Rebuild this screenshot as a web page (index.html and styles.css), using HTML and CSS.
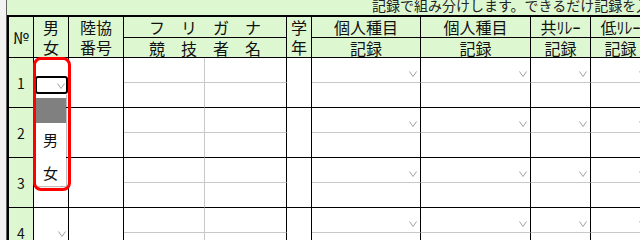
FILE: index.html
```html
<!DOCTYPE html>
<html lang="ja">
<head>
  <meta charset="UTF-8" />
  <title>申込入力</title>
  <link rel="stylesheet" href="styles.css">
</head>
<body>

  <div class="page">
    <div class="gutter"></div>
    <div class="sheet">
      <div class="caption">記録で組み分けします。できるだけ記録を入力してください。</div>
      <table class="entry">
        <colgroup>
          <col class="c-no"><col class="c-sex"><col class="c-reg"><col class="c-sei"><col class="c-mei">
          <col class="c-year"><col class="c-ind"><col class="c-ind2"><col class="c-relay"><col class="c-relay">
        </colgroup>
        <thead>
          <tr class="h1">
            <th rowspan="2" class="no-head">№</th>
            <th rowspan="2"><div class="stack">男<br>女</div></th>
            <th rowspan="2"><div class="stack">陸協<br>番号</div></th>
            <th colspan="2" class="spread"><span>フ</span><span>リ</span><span>ガ</span><span>ナ</span></th>
            <th rowspan="2"><div class="stack">学<br>年</div></th>
            <th class="small">個人種目</th>
            <th class="small">個人種目</th>
            <th class="small">共ﾘﾚｰ</th>
            <th class="small">低ﾘﾚｰ</th>
          </tr>
          <tr class="h2">
            <th colspan="2" class="spread"><span>競</span><span>技</span><span>者</span><span>名</span></th>
            <th>記録</th>
            <th>記録</th>
            <th>記録</th>
            <th>記録</th>
          </tr>
        </thead>
        <tbody id="rows"></tbody>
      </table>
    </div>
  </div>

  <!-- open dropdown on row 1 -->
  <div class="picker-box">
    <svg class="chev in-box" viewBox="0 0 8 6" width="8" height="6"><polyline points="0.5,0.5 4,5.5 7.5,0.5" fill="none" stroke="#a0a0a0" stroke-width="1"/></svg>
  </div>
  <div class="picker-list">
    <div class="opt sel"></div>
    <div class="opt">男</div>
    <div class="opt">女</div>
  </div>
  <div class="callout"></div>

  <script>
    const chev = '<svg class="chev" viewBox="0 0 8 6" width="8" height="6"><polyline points="0.5,0.5 4,5.5 7.5,0.5" fill="none" stroke="#a0a0a0" stroke-width="1"/></svg>';
    const rows = document.getElementById('rows');

    for (let n = 1; n <= 4; n++) {
      const sex = n === 1 ? '' : chev;
      rows.insertAdjacentHTML('beforeend', `
        <tr class="upper">
          <td rowspan="2" class="no">${n}</td>
          <td rowspan="2" class="sex">${sex}</td>
          <td rowspan="2"></td>
          <td class="sei"></td>
          <td></td>
          <td rowspan="2"></td>
          <td class="pick">${chev}</td>
          <td class="pick">${chev}</td>
          <td class="pick">${chev}</td>
          <td class="pick">${chev}</td>
        </tr>
        <tr class="lower">
          <td class="sei"></td>
          <td></td>
          <td></td>
          <td></td>
          <td></td>
          <td></td>
        </tr>`);
    }
  </script>

</body>
</html>
```

FILE: styles.css
```css
body {
  margin: 0;
  width: 640px;
  height: 240px;
  overflow: hidden;
  position: relative;
  font-family: "Noto Sans CJK JP", sans-serif;
  color: #111;
  background: #fff;
}

.page {
  display: flex;
  height: 100%;
}

.gutter {
  width: 6px;
  flex: none;
  background: #f2f2f2;
  border-right: 1px solid #606060;
}

.sheet {
  flex: 1;
  background: #ddf8d0;
}

.caption {
  height: 15px;
  padding-left: 365px;
  font-size: 14px;
  line-height: 10px;
  white-space: nowrap;
  overflow: hidden;
  color: #222;
}

.entry {
  border-collapse: separate;
  border-spacing: 0;
  table-layout: fixed;
  width: 644px;
  border-top: 2px solid #000;
  border-left: 2px solid #000;
}

.c-no { width: 25px; }
.c-sex { width: 35px; }
.c-reg { width: 55px; }
.c-sei { width: 81px; }
.c-mei { width: 82px; }
.c-year { width: 25px; }
.c-ind { width: 109px; }
.c-ind2 { width: 110px; }
.c-relay { width: 60px; }

.entry th,
.entry td {
  padding: 0;
  box-sizing: border-box;
  border-right: 1px solid #000;
  border-bottom: 1px solid #000;
  text-align: center;
  font-weight: normal;
  line-height: 1;
}

.entry th {
  background: #ddf8d0;
  font-size: 16px;
}

.entry td {
  background: #fff;
  position: relative;
}

.h1 { height: 21px; }
.h2 { height: 20px; }
.upper { height: 25px; }
.lower { height: 25px; }

.no-head {
  font-size: 14px;
}

.stack {
  line-height: 20px;
}

.small {
  font-size: 13px;
}

.spread span {
  display: inline-block;
  width: 16px;
  margin: 0 8px;
}

.entry td.no {
  background: #ddf8d0;
  font-size: 14px;
}

.upper td {
  border-bottom-color: #c8c8c8;
}

.upper td[rowspan] {
  border-bottom-color: #000;
}

.entry td.sei {
  border-right-color: #c8c8c8;
}

.chev {
  position: absolute;
  display: block;
}

.pick .chev {
  right: 3px;
  top: 13px;
}

.sex .chev {
  right: 2px;
  top: 23px;
}

.picker-box {
  position: absolute;
  left: 35px;
  top: 76px;
  width: 33px;
  height: 18px;
  box-sizing: border-box;
  border: 2px solid #000;
  border-radius: 3px;
  background: #fff;
}

.chev.in-box {
  left: 20px;
  top: 5px;
}

.picker-list {
  position: absolute;
  left: 35px;
  top: 94px;
  width: 31px;
  height: 92px;
  overflow: hidden;
  background: #fff;
  box-shadow: 1px 1px 1px rgba(0, 0, 0, 0.25);
  font-size: 15px;
  text-align: center;
}

.opt {
  height: 33px;
  line-height: 33px;
}

.opt.sel {
  height: 25px;
  margin-top: 4px;
  background: #808080;
}

.callout {
  position: absolute;
  left: 33px;
  top: 57px;
  width: 38px;
  height: 134px;
  box-sizing: border-box;
  border: 3px solid #f00;
  border-radius: 8px;
}
```
